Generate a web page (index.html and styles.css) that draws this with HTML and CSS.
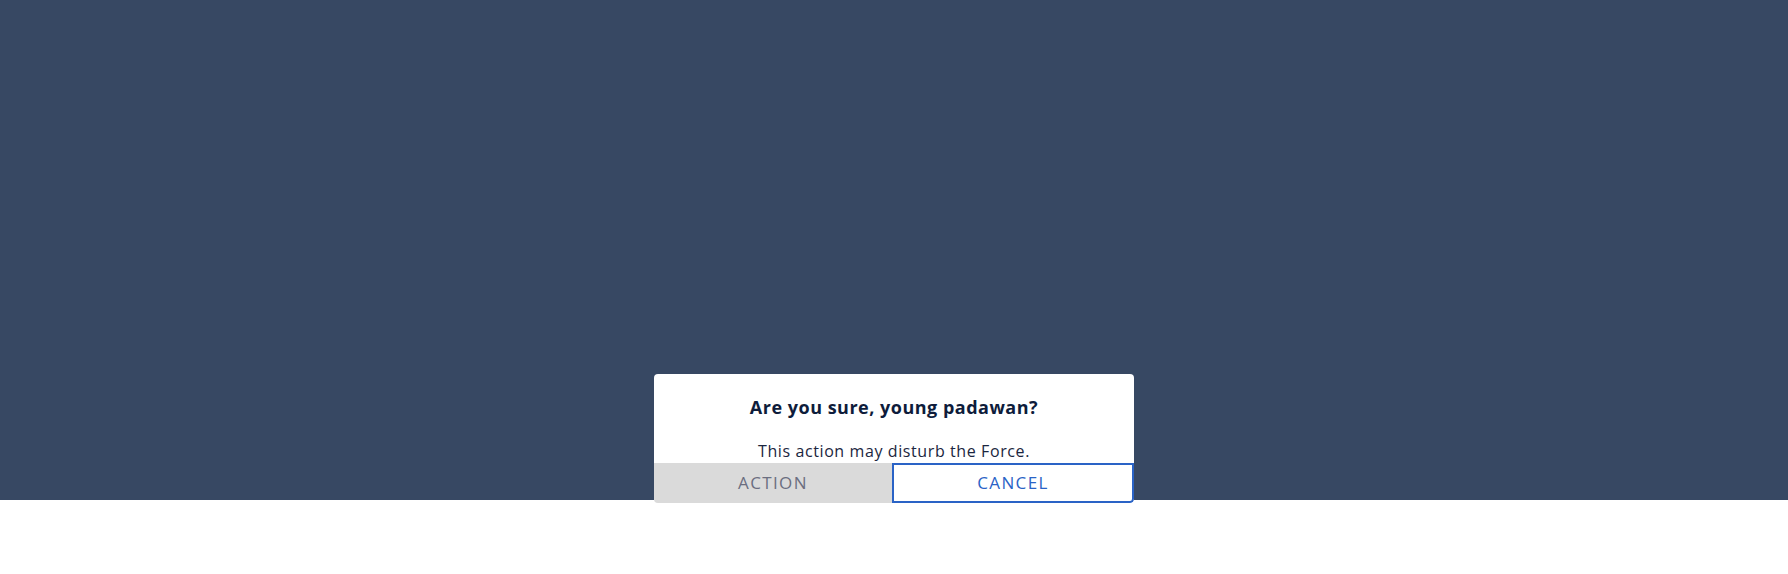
FILE: index.html
```html
<!DOCTYPE html>
<html lang="en">
<head>
<meta charset="utf-8">
<title>Dialog</title>
<link rel="stylesheet" href="styles.css">
</head>
<body>
<div class="stage">
  <div class="dialog" role="dialog" aria-labelledby="dlg-title">
    <h2 class="dialog-title" id="dlg-title">Are you sure, young padawan?</h2>
    <p class="dialog-text">This action may disturb the Force.</p>
    <div class="dialog-actions">
      <button class="btn btn-action" type="button">ACTION</button>
      <button class="btn btn-cancel" type="button">CANCEL</button>
    </div>
  </div>
</div>
</body>
</html>
```
FILE: styles.css
```css
html, body {
  margin: 0;
  padding: 0;
  background: #ffffff;
}
body {
  font-family: "Open Sans", "Noto Sans", sans-serif;
  width: 1788px;
  height: 574px;
  overflow: hidden;
}
.stage {
  height: 500px;
  background: #374863;
  display: flex;
  justify-content: center;
  align-items: flex-end;
}
.dialog {
  width: 480px;
  margin-bottom: -3px;
  background: #ffffff;
  border-radius: 4px;
  display: flex;
  flex-direction: column;
  align-items: center;
  overflow: hidden;
}
.dialog-title {
  margin: 21px 0 0;
  font-size: 18px;
  font-weight: 700;
  line-height: 24px;
  color: #0e1c3b;
  letter-spacing: 0.5px;
}
.dialog-text {
  margin: 21px 0 1px;
  font-size: 16px;
  line-height: 22px;
  color: #1b2640;
  letter-spacing: 0.6px;
}
.dialog-actions {
  align-self: stretch;
  display: flex;
  height: 40px;
}
.btn {
  flex: 1 1 0;
  margin: 0;
  padding: 0 0 2px;
  font-family: "Open Sans", "Noto Sans", sans-serif;
  font-size: 17px;
  letter-spacing: 0.08em;
  cursor: pointer;
}
.btn-action {
  background: #dadada;
  color: #6b6e80;
  border: none;
}
.btn-cancel {
  background: #ffffff;
  color: #2a63c6;
  border: 2px solid #2a63c6;
  border-radius: 0 0 4px 0;
}
```
